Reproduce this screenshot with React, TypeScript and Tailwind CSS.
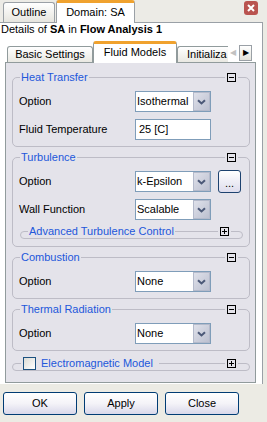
import clsx from "clsx";
import type { ReactNode } from "react";

const PANEL = "bg-[#e4e3ea]";

function BoxIcon({ plus }: { plus?: boolean }) {
  return (
    <svg width="9" height="9" viewBox="0 0 9 9" className="block">
      <rect x="0.5" y="0.5" width="8" height="8" fill="#fff" fillOpacity="0" stroke="#000" />
      <path d="M2 4.5h5" stroke="#000" />
      {plus && <path d="M4.5 2v5" stroke="#000" />}
    </svg>
  );
}

function Chevron() {
  return (
    <svg width="9" height="6" viewBox="0 0 9 6" className="block">
      <path d="M1 1.2l3.5 3.3L8 1.2" fill="none" stroke="#4b5877" strokeWidth="2" />
    </svg>
  );
}

function Select({ value }: { value: string }) {
  return (
    <div className="flex w-[76px] h-[21px] border border-[#7f9db9] bg-white">
      <span className="flex-1 pl-[1px] leading-[19px] text-black">{value}</span>
      <span className="w-[17px] h-[19px] border border-[#b4bacb] bg-gradient-to-br from-[#dfe1ea] to-[#bcc0d0] flex items-center justify-center">
        <Chevron />
      </span>
    </div>
  );
}

function Input({ value }: { value: string }) {
  return (
    <div className="w-[76px] h-[21px] border border-[#7f9db9] bg-white pl-[3px] leading-[19px]">{value}</div>
  );
}

function Row({ label, children }: { label: string; children: ReactNode }) {
  return (
    <div className="flex items-center h-[21px]">
      <span className="w-[116px] shrink-0">{label}</span>
      {children}
    </div>
  );
}

function Group({ title, children, className }: { title: string; children: ReactNode; className?: string }) {
  return (
    <div className={clsx("border border-[#bdbcc6] rounded-[5px] px-[6px] pb-[6px]", className)}>
      <div className="flex items-center justify-between h-[14px] -mt-[8px] pl-[1px] pr-[5px]">
        <span className={clsx(PANEL, "px-[1px] text-[#2257db] leading-[14px]")}>{title}</span>
        <span className={clsx(PANEL, "px-[2px]")}>
          <BoxIcon />
        </span>
      </div>
      <div className="mt-[7px] flex flex-col gap-[7px]">{children}</div>
    </div>
  );
}

function XpButton({ label }: { label: string }) {
  return (
    <button className="w-[74px] h-[23px] rounded-[3px] border border-[#003c74] bg-gradient-to-b from-white via-[#f4f3f8] to-[#d9d8ea] text-black leading-[21px]">
      {label}
    </button>
  );
}

export default function App() {
  return (
    <div className="w-[267px] h-[422px] bg-[#ecebe4] text-[11px] text-black font-['Liberation_Sans',Arial,sans-serif] overflow-hidden">
      {/* top tabs */}
      <div className="flex items-end h-[22px] pl-[3px] bg-[#ecebe6]">
        <div className="w-[52px] h-[20px] border border-b-0 border-[#9aa0a6] rounded-t-[3px] bg-gradient-to-b from-white to-[#e6e5df] text-center leading-[19px]">
          Outline
        </div>
        <div className="relative z-10 ml-[1px] w-[79px] h-[23px] -mb-px border border-b-0 border-[#9aa0a6] border-t-[3px] border-t-[#f0a22e] rounded-t-[3px] bg-white text-center leading-[18px]">
          Domain: SA
        </div>
        <div className="ml-auto mr-[9px] self-start mt-[1px] w-[14px] h-[14px] rounded-[3px] bg-[#b9534f] flex items-center justify-center">
          <svg width="8" height="8" viewBox="0 0 8 8" className="block">
            <path d="M1 1l6 6M7 1l-6 6" stroke="#fff" strokeWidth="2" />
          </svg>
        </div>
      </div>

      {/* details panel */}
      <div className="w-[263px] h-[362px] bg-white border-t border-r border-[#9aa0a6]">
        <div className="h-[17px] pl-[1px] leading-[12px] whitespace-nowrap">
          Details of <b>SA</b> in <b>Flow Analysis 1</b>
        </div>

        {/* inner tabs */}
        <div className="flex items-end h-[22px] pl-[7px] w-[256px]">
          <div className="w-[86px] h-[16px] border border-b-0 border-[#919b9c] rounded-t-[3px] bg-gradient-to-b from-white to-[#e9e8e2] text-center leading-[15px]">
            Basic Settings
          </div>
          <div className="relative z-10 w-[84px] h-[22px] -mb-px border border-b-0 border-[#919b9c] border-t-[3px] border-t-[#f0a22e] rounded-t-[3px] bg-white text-center leading-[16px]">
            Fluid Models
          </div>
          <div className="w-[51px] h-[16px] border border-b-0 border-r-0 border-[#919b9c] rounded-tl-[3px] bg-gradient-to-b from-white to-[#e9e8e2] overflow-hidden whitespace-nowrap pl-[9px] leading-[15px]">
            Initializa
          </div>
          <div className="flex items-center gap-[3px] h-[17px] mb-[1px] ml-[2px]">
            <span className="text-[#c2c2c2] text-[8px] leading-none">◀</span>
            <span className="w-[13px] h-[16px] border border-[#9aa0a6] bg-gradient-to-b from-white to-[#e4e3dc] flex items-center justify-center text-[8px] leading-none">
              ▶
            </span>
          </div>
        </div>

        {/* fluid models panel */}
        <div className={clsx(PANEL, "ml-[5px] w-[251px] h-[321px] border border-[#919b9c] pt-[14px] pl-[6px] pr-[5px] flex flex-col")}>
          <Group title="Heat Transfer">
            <Row label="Option">
              <Select value="Isothermal" />
            </Row>
            <Row label="Fluid Temperature">
              <Input value="25 [C]" />
            </Row>
          </Group>

          <Group title="Turbulence" className="mt-[10px] !pb-[7px]">
            <Row label="Option">
              <Select value="k-Epsilon" />
              <button className="ml-[7px] w-[23px] h-[23px] shrink-0 rounded-[3px] border border-[#1d426f] bg-gradient-to-b from-white to-[#dedded] leading-[24px] text-center">
                ...
              </button>
            </Row>
            <Row label="Wall Function">
              <Select value="Scalable" />
            </Row>
            <div className="mt-[4px] ml-[1px] border border-[#bdbcc6] rounded-[5px]">
              <div className="flex items-center justify-between h-[14px] -mt-[8px] pl-[7px] pr-[11px]">
                <span className={clsx(PANEL, "px-[1px] text-[#2257db] leading-[14px]")}>Advanced Turbulence Control</span>
                <span className={clsx(PANEL, "px-[2px]")}>
                  <BoxIcon plus />
                </span>
              </div>
            </div>
          </Group>

          <Group title="Combustion" className="mt-[10px]">
            <Row label="Option">
              <Select value="None" />
            </Row>
          </Group>

          <Group title="Thermal Radiation" className="mt-[10px]">
            <Row label="Option">
              <Select value="None" />
            </Row>
          </Group>

          <div className="mt-[12px] border border-[#bdbcc6] rounded-[5px]">
            <div className="flex items-center justify-between h-[14px] -mt-[8px] pl-[8px] pr-[11px]">
              <span className={clsx(PANEL, "flex items-center gap-[5px] pl-[2px] pr-[6px]")}>
                <span className="w-[13px] h-[13px] border border-[#1c5180] bg-gradient-to-br from-[#dcdcd6] to-white" />
                <span className="text-[#2257db] leading-[14px]">Electromagnetic Model</span>
              </span>
              <span className={clsx(PANEL, "px-[2px]")}>
                <BoxIcon plus />
              </span>
            </div>
          </div>
        </div>
      </div>

      {/* buttons */}
      <div className="flex gap-[7px] pl-[3px] mt-[8px]">
        <XpButton label="OK" />
        <XpButton label="Apply" />
        <XpButton label="Close" />
      </div>
    </div>
  );
}
